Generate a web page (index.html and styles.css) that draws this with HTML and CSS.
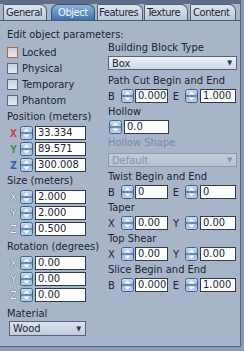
FILE: index.html
```html
<!DOCTYPE html>
<html>
<head>
<meta charset="utf-8">
<link rel="stylesheet" href="styles.css">
</head>
<body>
<svg class="defs" width="0" height="0">
  <defs>
    <linearGradient id="spg" x1="0" y1="0" x2="0" y2="1">
      <stop offset="0" stop-color="#d4e3f2"/>
      <stop offset="0.5" stop-color="#8fb1d6"/>
      <stop offset="1" stop-color="#c2d6ea"/>
    </linearGradient>
    <symbol id="spin" viewBox="0 0 13 14">
      <rect x="0.5" y="0.5" width="12" height="13" rx="2" fill="url(#spg)" stroke="#3d6391"/>
      <line x1="1" y1="7" x2="12" y2="7" stroke="#3d6391"/>
      <path d="M3 5.6 L6.5 2.4 L10 5.6Z" fill="#fff"/>
      <path d="M3 8.4 L6.5 11.6 L10 8.4Z" fill="#fff"/>
    </symbol>
  </defs>
</svg>
<div class="floater">
  <div class="tabbar">
    <div class="tab t-general">General</div>
    <div class="tab sel t-object">Object</div>
    <div class="tab t-features">Features</div>
    <div class="tab t-texture">Texture</div>
    <div class="tab t-content">Content</div>
  </div>
  <div class="panel">
    <div class="title">Edit object parameters:</div>
    <div class="cols">
      <div class="left">
        <div class="check first"><span class="cb focus"></span>Locked</div>
        <div class="check"><span class="cb"></span>Physical</div>
        <div class="check"><span class="cb"></span>Temporary</div>
        <div class="check"><span class="cb"></span>Phantom</div>

        <div class="lbl l-pos">Position (meters)</div>
        <div class="lrow"><span class="ax ax-x">X</span><svg class="sp"><use href="#spin"/></svg><span class="inp lw">33.334</span></div>
        <div class="lrow"><span class="ax ax-y">Y</span><svg class="sp"><use href="#spin"/></svg><span class="inp lw">89.571</span></div>
        <div class="lrow"><span class="ax ax-z">Z</span><svg class="sp"><use href="#spin"/></svg><span class="inp lw">300.008</span></div>

        <div class="lbl">Size (meters)</div>
        <div class="lrow"><span class="ax ax-w">X</span><svg class="sp"><use href="#spin"/></svg><span class="inp lw">2.000</span></div>
        <div class="lrow"><span class="ax ax-w">Y</span><svg class="sp"><use href="#spin"/></svg><span class="inp lw">2.000</span></div>
        <div class="lrow"><span class="ax ax-w">Z</span><svg class="sp"><use href="#spin"/></svg><span class="inp lw">0.500</span></div>

        <div class="lbl l-rot">Rotation (degrees)</div>
        <div class="lrow"><span class="ax ax-w">X</span><svg class="sp"><use href="#spin"/></svg><span class="inp lw">0.00</span></div>
        <div class="lrow"><span class="ax ax-w">Y</span><svg class="sp"><use href="#spin"/></svg><span class="inp lw">0.00</span></div>
        <div class="lrow"><span class="ax ax-w">Z</span><svg class="sp"><use href="#spin"/></svg><span class="inp lw">0.00</span></div>

        <div class="lbl l-mat">Material</div>
        <div class="combo c-wood"><span>Wood</span><span class="arr">&#9660;</span></div>
      </div>

      <div class="right">
        <div class="rlbl r-first">Building Block Type</div>
        <div class="combo c-box"><span>Box</span><span class="arr">&#9660;</span></div>

        <div class="rlbl r-path">Path Cut Begin and End</div>
        <div class="rrow"><span class="rl">B</span><svg class="sp"><use href="#spin"/></svg><span class="inp rw1">0.000</span><span class="rl2">E</span><svg class="sp"><use href="#spin"/></svg><span class="inp rw2">1.000</span></div>

        <div class="rlbl">Hollow</div>
        <div class="rrow"><svg class="sp sp-h"><use href="#spin"/></svg><span class="inp hw">0.0</span></div>

        <div class="rlbl dis">Hollow Shape</div>
        <div class="combo c-def dis"><span>Default</span><span class="arr">&#9660;</span></div>

        <div class="rlbl">Twist Begin and End</div>
        <div class="rrow"><span class="rl">B</span><svg class="sp"><use href="#spin"/></svg><span class="inp rw1">0</span><span class="rl2">E</span><svg class="sp"><use href="#spin"/></svg><span class="inp rw2">0</span></div>

        <div class="rlbl">Taper</div>
        <div class="rrow"><span class="rl">X</span><svg class="sp"><use href="#spin"/></svg><span class="inp rw1">0.00</span><span class="rl2">Y</span><svg class="sp"><use href="#spin"/></svg><span class="inp rw2">0.00</span></div>

        <div class="rlbl">Top Shear</div>
        <div class="rrow"><span class="rl">X</span><svg class="sp"><use href="#spin"/></svg><span class="inp rw1">0.00</span><span class="rl2">Y</span><svg class="sp"><use href="#spin"/></svg><span class="inp rw2">0.00</span></div>

        <div class="rlbl">Slice Begin and End</div>
        <div class="rrow"><span class="rl">B</span><svg class="sp"><use href="#spin"/></svg><span class="inp rw1">0.000</span><span class="rl2">E</span><svg class="sp"><use href="#spin"/></svg><span class="inp rw2">1.000</span></div>
      </div>
    </div>
  </div>
</div>
</body>
</html>
```
FILE: styles.css
```css
* { box-sizing: border-box; }
html, body { margin: 0; padding: 0; }
body {
  width: 244px;
  height: 351px;
  background: #8e9bb0;
  font-family: "DejaVu Sans Condensed", "DejaVu Sans", sans-serif;
  font-size: 11px;
  color: #1b2436;
  overflow: hidden;
}
.defs { position: absolute; width: 0; height: 0; }

.floater {
  width: 241px;
  height: 347px;
  display: flex;
  flex-direction: column;
  background: #a8b5c8;
  border-right: 1px solid #56647c;
  border-bottom: 1px solid #56647c;
}

.tabbar {
  height: 21px;
  padding: 4px 0 0 3px;
  display: flex;
  align-items: flex-end;
  background: linear-gradient(#5f6e86 0, #5f6e86 4px, #a8b5c8 4px);
  border-bottom: 1px solid #4d5c75;
}
.tab {
  height: 16px;
  line-height: 15px;
  padding: 0 0 0 2px;
  background: linear-gradient(#dfe6ef, #bac6d6);
  border: 1px solid #4e5e78;
  border-bottom: none;
  border-radius: 2px 7px 0 0;
  color: #1b2436;
  white-space: nowrap;
  overflow: hidden;
  letter-spacing: -0.4px;
  flex: none;
}
.tab.sel {
  background: linear-gradient(#8ab4e2, #3f72ae);
  color: #f4f8ff;
  border-color: #33507a;
  border-radius: 7px 7px 0 0;
}
.t-general { width: 44px; margin-right: 4px; }
.t-object { width: 44px; padding-left: 6px; margin-right: 2px; }
.t-features { width: 46px; margin-right: 1px; padding-left: 1px; }
.t-texture { width: 44px; margin-right: 2px; }
.t-content { width: 46px; }

.panel {
  flex: 1;
  padding: 7px 0 0 7px;
}
.title {
  height: 13px;
  line-height: 13px;
  white-space: nowrap;
}
.cols {
  display: flex;
}
.left {
  width: 101px;
  display: flex;
  flex-direction: column;
}
.right {
  width: 130px;
  display: flex;
  flex-direction: column;
}

.check {
  height: 16px;
  display: flex;
  align-items: center;
  white-space: nowrap;
}
.check.first { margin-top: 3px; }
.cb {
  width: 11px;
  height: 11px;
  margin-right: 4px;
  border: 1px solid #5d6b82;
  background: linear-gradient(#c9d2de, #e4e9f0);
}
.cb.focus { border-color: #b8662c; }

.lbl {
  height: 16px;
  line-height: 16px;
  white-space: nowrap;
}
.l-pos { margin-top: 1px; }
.l-rot { margin-top: 2px; }
.l-mat { margin-top: 4px; height: 14px; line-height: 14px; }

.lrow {
  height: 16px;
  display: flex;
  align-items: center;
}
.ax {
  width: 13px;
  text-align: center;
  font-weight: bold;
  font-size: 10px;
}
.ax-x { color: #c8473e; }
.ax-y { color: #3a9a3a; }
.ax-z { color: #2d5fc0; }
.ax-w { color: #f2f5fa; font-weight: normal; font-size: 11px; text-shadow: 0 0 1px #3e4b60, 0 0 1px #3e4b60; }

.sp {
  width: 13px;
  height: 14px;
  flex: none;
}
.inp {
  height: 14px;
  line-height: 12px;
  padding-left: 2px;
  background: #ffffff;
  border: 1px solid #2f3c52;
  color: #1b2436;
  white-space: nowrap;
  flex: none;
}
.lw { width: 51px; margin-left: 2px; }

.combo {
  height: 14px;
  display: flex;
  align-items: center;
  justify-content: space-between;
  padding: 0 4px 0 3px;
  border: 1px solid #55647b;
  background: linear-gradient(#eef2f7, #cfd8e4);
}
.combo .arr { font-size: 7px; color: #2b3548; }
.c-wood { width: 77px; margin-left: 2px; margin-top: 0; height: 15px; background: linear-gradient(#dde3ec, #c2ccda); }
.c-box { width: 129px; margin-top: 1px; }
.c-def { width: 129px; margin-top: 2px; margin-bottom: 2px; border-color: #8e9ab0; background: linear-gradient(#c3ccd9, #b7c2d2); color: #8793a8; }
.c-def .arr { color: #8793a8; }

.rlbl {
  height: 16px;
  line-height: 16px;
  white-space: nowrap;
}
.r-first { height: 14px; line-height: 14px; }
.r-path { margin-top: 3px; }
.rlbl.dis { color: #7e8aa0; }

.rrow {
  height: 14px;
  margin-bottom: 1px;
  display: flex;
  align-items: center;
}
.rl { width: 12px; }
.rl2 { width: 16px; text-align: center; }
.rrow .sp { margin-left: 1px; }
.rw1 { width: 33px; margin-left: 1px; }
.rw2 { width: 36px; margin-left: 2px; }
.sp-h { margin-left: 1px; }
.hw { width: 45px; margin-left: 2px; }
```
